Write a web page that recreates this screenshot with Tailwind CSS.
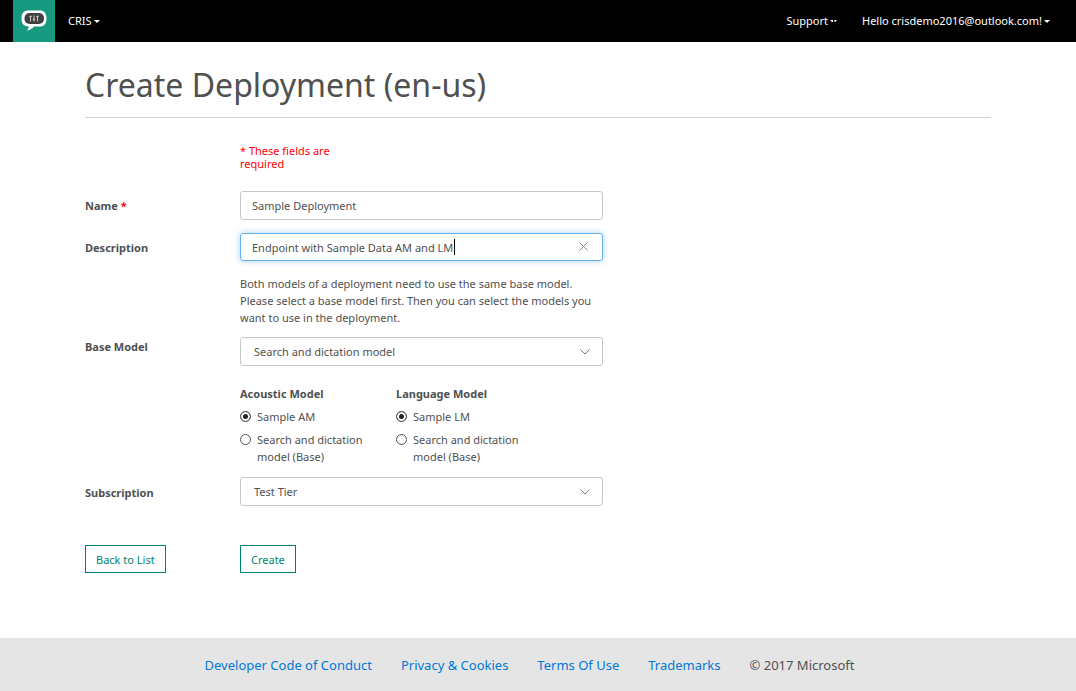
<!DOCTYPE html>
<html lang="en">
<head>
<meta charset="utf-8">
<meta name="viewport" content="width=device-width, initial-scale=1">
<title>Create Deployment</title>
<script src="https://cdn.jsdelivr.net/npm/@tailwindcss/browser@4"></script>
</head>
<body class="flex min-h-screen flex-col bg-white font-['Noto_Sans','Open_Sans',sans-serif] text-[11px] leading-[17px] text-[#505050]">
  <header class="flex h-[42px] items-center bg-black pr-[26px] pl-[13px] text-white">
    <a href="#" aria-label="Home" class="flex h-[42px] w-[42px] items-center justify-center bg-[#16997f]">
      <svg class="h-[22px] w-[26px]" viewBox="0 0 26 22" aria-hidden="true">
        <path d="M7.500.500h11c4.500 0 7 2.500 7 8s-2.500 8-7 8h-5.500c-1.500 2-4 3.500-7 4 1.200-1.200 1.700-2.500 1.700-4C3 16.300.500 14 .500 8.500s2.500-8 7-8Z" fill="#fff"/>
        <rect x="3.500" y="3" width="19.500" height="11" rx="5" fill="#404040"/>
        <path d="M9.500 5.500v6M13 5.500v6M16.500 5.500v6" stroke="#ccc" stroke-width="1"/>
        <path d="M8.300 6.500h2.400M11.800 9.500h2.400M15.300 6.500h2.400" stroke="#ccc" stroke-width="1"/>
      </svg>
    </a>
    <nav class="flex flex-1 items-center justify-between pb-[2px] pl-[13px]">
      <button type="button" class="flex items-center gap-[2px]">CRIS
        <svg class="mt-[3px] h-[3px] w-[6px]" viewBox="0 0 6 3" aria-hidden="true"><path d="M0 0h6L3 3Z" fill="#fff"/></svg>
      </button>
      <div class="flex items-center gap-[25px]">
        <button type="button" class="flex items-center gap-[2px]">Support
          <svg class="mt-[3px] h-[3px] w-[7px]" viewBox="0 0 7 3" aria-hidden="true"><path d="M0 0h3v2H2ZM4 0h3L5 2.500Z" fill="#fff"/></svg>
        </button>
        <button type="button" class="flex items-center gap-[2px]">Hello crisdemo2016@outlook.com!
          <svg class="mt-[3px] h-[3px] w-[6px]" viewBox="0 0 6 3" aria-hidden="true"><path d="M0 0h6L3 3Z" fill="#fff"/></svg>
        </button>
      </div>
    </nav>
  </header>

  <main class="flex-1 px-[85px] pt-[21px]">
    <h1 class="border-b border-[#d0d0d0] pb-[10px] text-[32px] leading-[44px]">Create Deployment (en-us)</h1>
    <form class="grid grid-cols-[155px_minmax(0,363px)] pt-[26px]">
      <p class="col-start-2 mb-[21px] w-[110px] leading-[13px] text-[#ff0000]">* These fields are required</p>

      <label for="name" class="pt-[6px] font-bold">Name <span class="text-[#ff0000]">*</span></label>
      <input id="name" type="text" required value="Sample Deployment" class="mb-[13px] h-[29px] rounded-[3px] border border-[#c8c8c8] px-[11px]">

      <label for="description" class="pt-[6px] font-bold">Description</label>
      <div class="relative">
        <input id="description" type="text" value="Endpoint with Sample Data AM and LM" class="h-[28px] w-full rounded-[3px] border border-[#66afe9] pr-[30px] pl-[11px] shadow-[0_0_6px_rgba(102,175,233,0.6)] outline-none">
        <span class="absolute top-[6px] left-[214px] h-4 w-px bg-black"></span>
        <button type="button" aria-label="Clear description" class="absolute top-[9px] right-[15px] flex">
          <svg class="h-[9px] w-[9px]" viewBox="0 0 9 9" aria-hidden="true"><path d="M.500.500l8 8m0-8l-8 8" stroke="#888" fill="none"/></svg>
        </button>
      </div>

      <p class="col-start-2 mt-[14px] mb-[11px]">Both models of a deployment need to use the same base model. Please select a base model first. Then you can select the models you want to use in the deployment.</p>

      <label for="base" class="pt-[1px] font-bold">Base Model</label>
      <div class="relative">
        <select id="base" class="h-[29px] w-full appearance-none rounded-[3px] border border-[#c8c8c8] px-[13px]"><option>Search and dictation model</option></select>
        <svg class="pointer-events-none absolute top-[12px] right-[13px] h-[6px] w-[10px]" viewBox="0 0 10 6" aria-hidden="true"><path d="M.500.500L5 5l4.500-4.500" stroke="#777" fill="none"/></svg>
      </div>

      <div class="col-start-2 mt-[19px] mb-[12px] flex gap-[20px]">
        <fieldset class="w-[136px]">
          <legend class="mb-[6px] font-bold">Acoustic Model</legend>
          <label class="mb-[6px] flex gap-[6px]"><input type="radio" name="am" checked class="mt-[3px] h-[11px] w-[11px] shrink-0 appearance-none rounded-full border border-[#555] checked:bg-[#222] checked:shadow-[inset_0_0_0_2px_#fff]">Sample AM</label>
          <label class="flex gap-[6px]"><input type="radio" name="am" class="mt-[3px] h-[11px] w-[11px] shrink-0 appearance-none rounded-full border border-[#555] checked:bg-[#222] checked:shadow-[inset_0_0_0_2px_#fff]">Search and dictation model (Base)</label>
        </fieldset>
        <fieldset class="w-[136px]">
          <legend class="mb-[6px] font-bold">Language Model</legend>
          <label class="mb-[6px] flex gap-[6px]"><input type="radio" name="lm" checked class="mt-[3px] h-[11px] w-[11px] shrink-0 appearance-none rounded-full border border-[#555] checked:bg-[#222] checked:shadow-[inset_0_0_0_2px_#fff]">Sample LM</label>
          <label class="flex gap-[6px]"><input type="radio" name="lm" class="mt-[3px] h-[11px] w-[11px] shrink-0 appearance-none rounded-full border border-[#555] checked:bg-[#222] checked:shadow-[inset_0_0_0_2px_#fff]">Search and dictation model (Base)</label>
        </fieldset>
      </div>

      <label for="subscription" class="pt-[7px] font-bold">Subscription</label>
      <div class="relative mb-[39px]">
        <select id="subscription" class="h-[29px] w-full appearance-none rounded-[3px] border border-[#c8c8c8] px-[13px]"><option>Test Tier</option></select>
        <svg class="pointer-events-none absolute top-[12px] right-[13px] h-[6px] w-[10px]" viewBox="0 0 10 6" aria-hidden="true"><path d="M.500.500L5 5l4.500-4.500" stroke="#777" fill="none"/></svg>
      </div>

      <button type="button" class="h-[28px] justify-self-start border border-[#008272] px-[10px] text-[#008272]">Back to List</button>
      <button type="submit" class="h-[28px] justify-self-start border border-[#008272] px-[10px] text-[#008272]">Create</button>
    </form>
  </main>

  <footer class="flex h-[53px] items-center justify-center gap-[29px] bg-[#e5e5e5] pt-[2px] pr-[17px] text-[13px]">
    <a href="#" class="text-[#0078d7]">Developer Code of Conduct</a>
    <a href="#" class="text-[#0078d7]">Privacy &amp; Cookies</a>
    <a href="#" class="text-[#0078d7]">Terms Of Use</a>
    <a href="#" class="text-[#0078d7]">Trademarks</a>
    <span>© 2017 Microsoft</span>
  </footer>
</body>
</html>
